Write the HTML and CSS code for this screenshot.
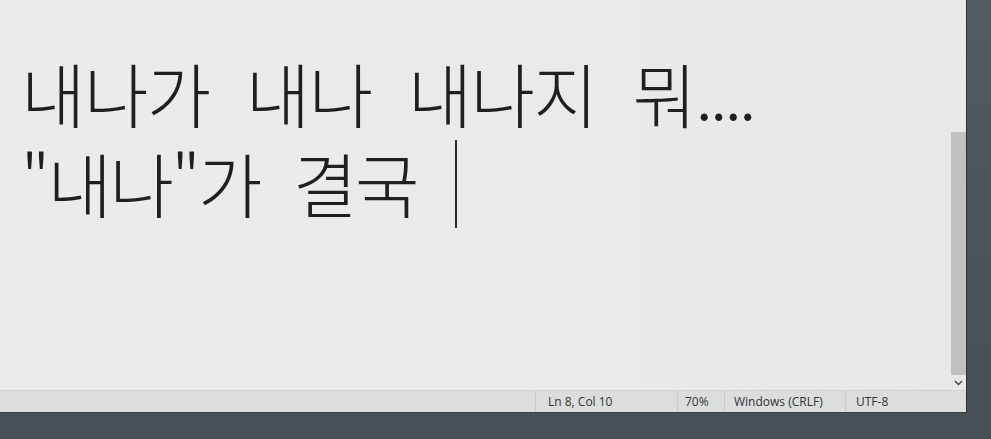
FILE: index.html
```html
<!DOCTYPE html>
<html lang="ko">
<head>
<meta charset="utf-8">
<link rel="stylesheet" href="styles.css">
</head>
<body>
<div class="desktop">
  <div class="window">
    <div class="editor">
      <div class="text">
        <div class="line first">내나가 내나 내나지 뭐<span class="dots">....</span></div>
        <div class="line second">"내나"가 결국<span class="caret"></span></div>
      </div>
      <div class="scrollbar">
        <div class="track-top"></div>
        <div class="thumb"></div>
        <div class="arrow">
          <svg width="9" height="6" viewBox="0 0 9 6"><path d="M1 1 L4.5 4.5 L8 1" fill="none" stroke="#444" stroke-width="1.4"/></svg>
        </div>
      </div>
    </div>
    <div class="statusbar">
      <div class="cell pos">Ln 8, Col 10</div>
      <div class="cell zoom">70%</div>
      <div class="cell eol">Windows (CRLF)</div>
      <div class="cell enc">UTF-8</div>
    </div>
  </div>
</div>
</body>
</html>
```

FILE: styles.css
```css
html, body {
  margin: 0;
  padding: 0;
  width: 991px;
  height: 439px;
  overflow: hidden;
}
.desktop {
  width: 991px;
  height: 439px;
  background: linear-gradient(180deg, #555b62 0%, #4b5259 60%, #485057 100%);
}
.window {
  width: 966px;
  height: 412px;
  border-right: 1px solid #2c3034;
  border-bottom: 1px solid #3a3e42;
  display: flex;
  flex-direction: column;
  background: #e9eaea;
}
.editor {
  flex: 1;
  display: flex;
  min-height: 0;
  border-bottom: 1px solid #d2d3d3;
}
.text {
  flex: 1;
  padding: 48px 0 0 21px;
  font-family: "Noto Sans CJK KR", "Noto Sans", sans-serif;
  font-weight: 300;
  font-size: 70px;
  line-height: 90px;
  color: #1f1f1f;
  background: linear-gradient(90deg, #ebebeb 0%, #e9eaea 50%, #e7e8e8 100%);
}
.line {
  white-space: pre;
  height: 90px;
}
.first {
  letter-spacing: -1.5px;
  word-spacing: 18px;
}
.second {
  letter-spacing: -2.5px;
  word-spacing: 16px;
}
.dots {
  letter-spacing: -3px;
  margin-left: 0;
}
.caret {
  display: inline-block;
  width: 0;
  height: 88px;
  border-left: 2px solid #2a2a2a;
  margin-left: 38px;
  vertical-align: -15px;
}
.scrollbar {
  width: 15px;
  display: flex;
  flex-direction: column;
  background: #e8e8e8;
}
.track-top {
  height: 132px;
  background: #e9e9e9;
}
.thumb {
  height: 243px;
  background: #c1c1c1;
}
.arrow {
  flex: 1;
  display: flex;
  align-items: center;
  justify-content: center;
  background: #e8e8e8;
}
.statusbar {
  height: 21px;
  display: flex;
  align-items: center;
  background: #dcdddd;
  font-family: "Open Sans", "Noto Sans", sans-serif;
  font-size: 12px;
  color: #333;
  padding-left: 535px;
}
.cell {
  height: 21px;
  line-height: 21px;
  border-left: 1px solid #c9caca;
  padding-left: 12px;
  box-sizing: border-box;
}
.pos { width: 142px; }
.zoom { width: 47px; padding-left: 7px; }
.eol { width: 121px; padding-left: 9px; }
.enc { width: 120px; padding-left: 10px; }
```
